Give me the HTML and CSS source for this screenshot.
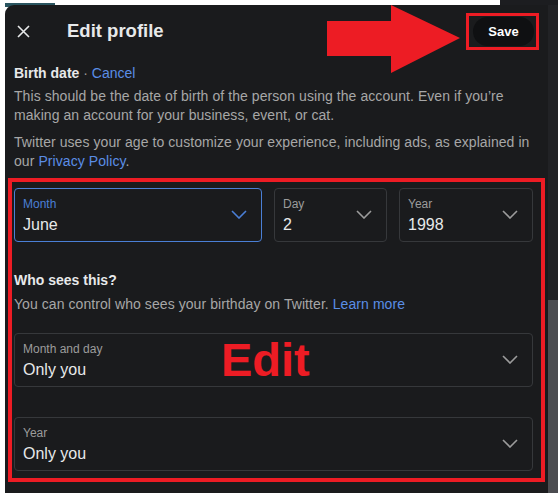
FILE: index.html
```html
<!DOCTYPE html>
<html>
<head>
<meta charset="utf-8">
<link rel="stylesheet" href="styles.css">
</head>
<body>
<div class="peek"></div>
<div class="peek-r"></div>
<div class="frame">
  <div class="content">
    <header class="header">
      <button class="close" aria-label="Close">
        <svg width="13" height="13" viewBox="0 0 13 13"><path d="M1 1 L12 12 M12 1 L1 12" stroke="#e7e9ea" stroke-width="1.6" fill="none"/></svg>
      </button>
      <h1 class="title">Edit profile</h1>
      <button class="save">Save</button>
    </header>

    <div class="birth">
      <span class="strong">Birth date</span> <span class="dot">·</span> <a class="link">Cancel</a>
    </div>
    <p class="para">This should be the date of birth of the person using the account. Even if you’re making an account for your business, event, or cat.</p>
    <p class="para para2">Twitter uses your age to customize your experience, including ads, as explained in our <a class="link">Privacy Policy</a>.</p>

    <section class="annot-box">
      <div class="dates">
        <div class="field focused">
          <div class="label">Month</div>
          <div class="value">June</div>
          <svg class="chev" width="16" height="9" viewBox="0 0 16 9"><path d="M1 1 L8 8 L15 1" stroke="currentColor" stroke-width="1.6" fill="none"/></svg>
        </div>
        <div class="field">
          <div class="label">Day</div>
          <div class="value">2</div>
          <svg class="chev" width="16" height="9" viewBox="0 0 16 9"><path d="M1 1 L8 8 L15 1" stroke="currentColor" stroke-width="1.6" fill="none"/></svg>
        </div>
        <div class="field">
          <div class="label">Year</div>
          <div class="value">1998</div>
          <svg class="chev" width="16" height="9" viewBox="0 0 16 9"><path d="M1 1 L8 8 L15 1" stroke="currentColor" stroke-width="1.6" fill="none"/></svg>
        </div>
      </div>

      <div class="who strong">Who sees this?</div>
      <div class="who-text">You can control who sees your birthday on Twitter. <a class="link">Learn more</a></div>

      <div class="field wide">
        <div class="label">Month and day</div>
        <div class="value">Only you</div>
        <svg class="chev" width="16" height="9" viewBox="0 0 16 9"><path d="M1 1 L8 8 L15 1" stroke="currentColor" stroke-width="1.6" fill="none"/></svg>
      </div>
      <div class="field wide second">
        <div class="label">Year</div>
        <div class="value">Only you</div>
        <svg class="chev" width="16" height="9" viewBox="0 0 16 9"><path d="M1 1 L8 8 L15 1" stroke="currentColor" stroke-width="1.6" fill="none"/></svg>
      </div>
    </section>
  </div>
  <div class="scrollbar"><div class="thumb"></div></div>
</div>

<svg class="arrow" width="558" height="80" viewBox="0 0 558 80">
  <polygon points="327,21 391,21 391,5 460,38 391,73 391,56 327,56" fill="#ed1c24"/>
</svg>
<div class="save-mark"></div>
<div class="edit-mark">Edit</div>
</body>
</html>
```

FILE: styles.css
```css
* { box-sizing: border-box; }

body {
  margin: 0;
  background: #ffffff;
  position: relative;
  width: 558px;
  height: 493px;
  overflow: hidden;
  font-family: "Liberation Sans", Arial, sans-serif;
  color: #e7e9ea;
}

.peek {
  position: absolute;
  left: 5px;
  top: 3px;
  width: 50px;
  height: 4px;
  background: #2a5560;
}

.peek-r {
  position: absolute;
  left: 500px;
  top: 0;
  width: 58px;
  height: 6px;
  background: #1c1d20;
}

.frame {
  margin: 5px 0 0 5px;
  height: 488px;
  display: flex;
  background: #1a1b1d;
  border-top-left-radius: 9px;
  overflow: hidden;
  position: relative;
}

.content {
  flex: 1;
  padding: 0 15px 0 9px;
}

.scrollbar {
  width: 10px;
  background: #212225;
  display: flex;
  flex-direction: column;
}

.thumb {
  margin-top: 295px;
  flex: 1;
  background: #4b4c50;
}

.header {
  height: 52px;
  display: flex;
  align-items: center;
}

.close {
  background: none;
  border: 0;
  padding: 0;
  margin-left: 3px;
  width: 13px;
  height: 13px;
  display: flex;
}

.title {
  margin: 0 0 0 37px;
  font-size: 18.5px;
  font-weight: bold;
  color: #e7e9ea;
  flex: 1;
}

.save {
  background: #0f1012;
  color: #ffffff;
  border: 0;
  border-radius: 999px;
  width: 61px;
  height: 29px;
  font-family: "Liberation Sans", Arial, sans-serif;
  font-size: 13px;
  font-weight: bold;
  margin-right: -1px;
}

.strong {
  font-weight: bold;
  color: #e7e9ea;
}

.link {
  color: #5a8ee6;
}

.dot {
  color: #9a9a9a;
}

.birth {
  margin-top: 7px;
  font-size: 14px;
  line-height: 19px;
  margin-bottom: 4px;
}

.para {
  margin: 0;
  font-size: 14px;
  line-height: 19px;
  color: #a7a7a7;
  letter-spacing: 0.07px;
}

.para2 {
  margin-top: 8px;
}

.annot-box {
  margin: 7px -12px 0 -6px;
  border: 4px solid #ed1c24;
  padding: 6px 8px 7px 2px;
}

.dates {
  display: grid;
  grid-template-columns: 248px 113px 1fr;
  column-gap: 12px;
}

.field {
  position: relative;
  height: 54px;
  border: 1px solid #36383b;
  border-radius: 4px;
  padding: 7px 0 0 8px;
  color: #9c9c9c;
}

.field.focused {
  border-color: #4a7fd6;
  color: #4a7fd6;
}

.label {
  font-size: 12px;
  line-height: 16px;
}

.value {
  margin-top: 2px;
  font-size: 16px;
  line-height: 22px;
  color: #e7e9ea;
}

.chev {
  position: absolute;
  right: 14px;
  top: 21px;
}

.who {
  margin-top: 29px;
  font-size: 14px;
  line-height: 19px;
}

.who-text {
  margin-top: 5px;
  font-size: 14px;
  line-height: 19px;
  color: #a7a7a7;
  letter-spacing: 0.07px;
  margin-bottom: 19px;
}

.field.second {
  margin-top: 30px;
}

.arrow {
  position: absolute;
  left: 0;
  top: 0;
}

.save-mark {
  position: absolute;
  left: 466px;
  top: 13px;
  width: 73px;
  height: 37px;
  border: 3px solid #ed1c24;
}

.edit-mark {
  position: absolute;
  left: 221px;
  top: 334px;
  font-size: 47px;
  line-height: 52px;
  font-weight: bold;
  color: #ed1c24;
}
```
